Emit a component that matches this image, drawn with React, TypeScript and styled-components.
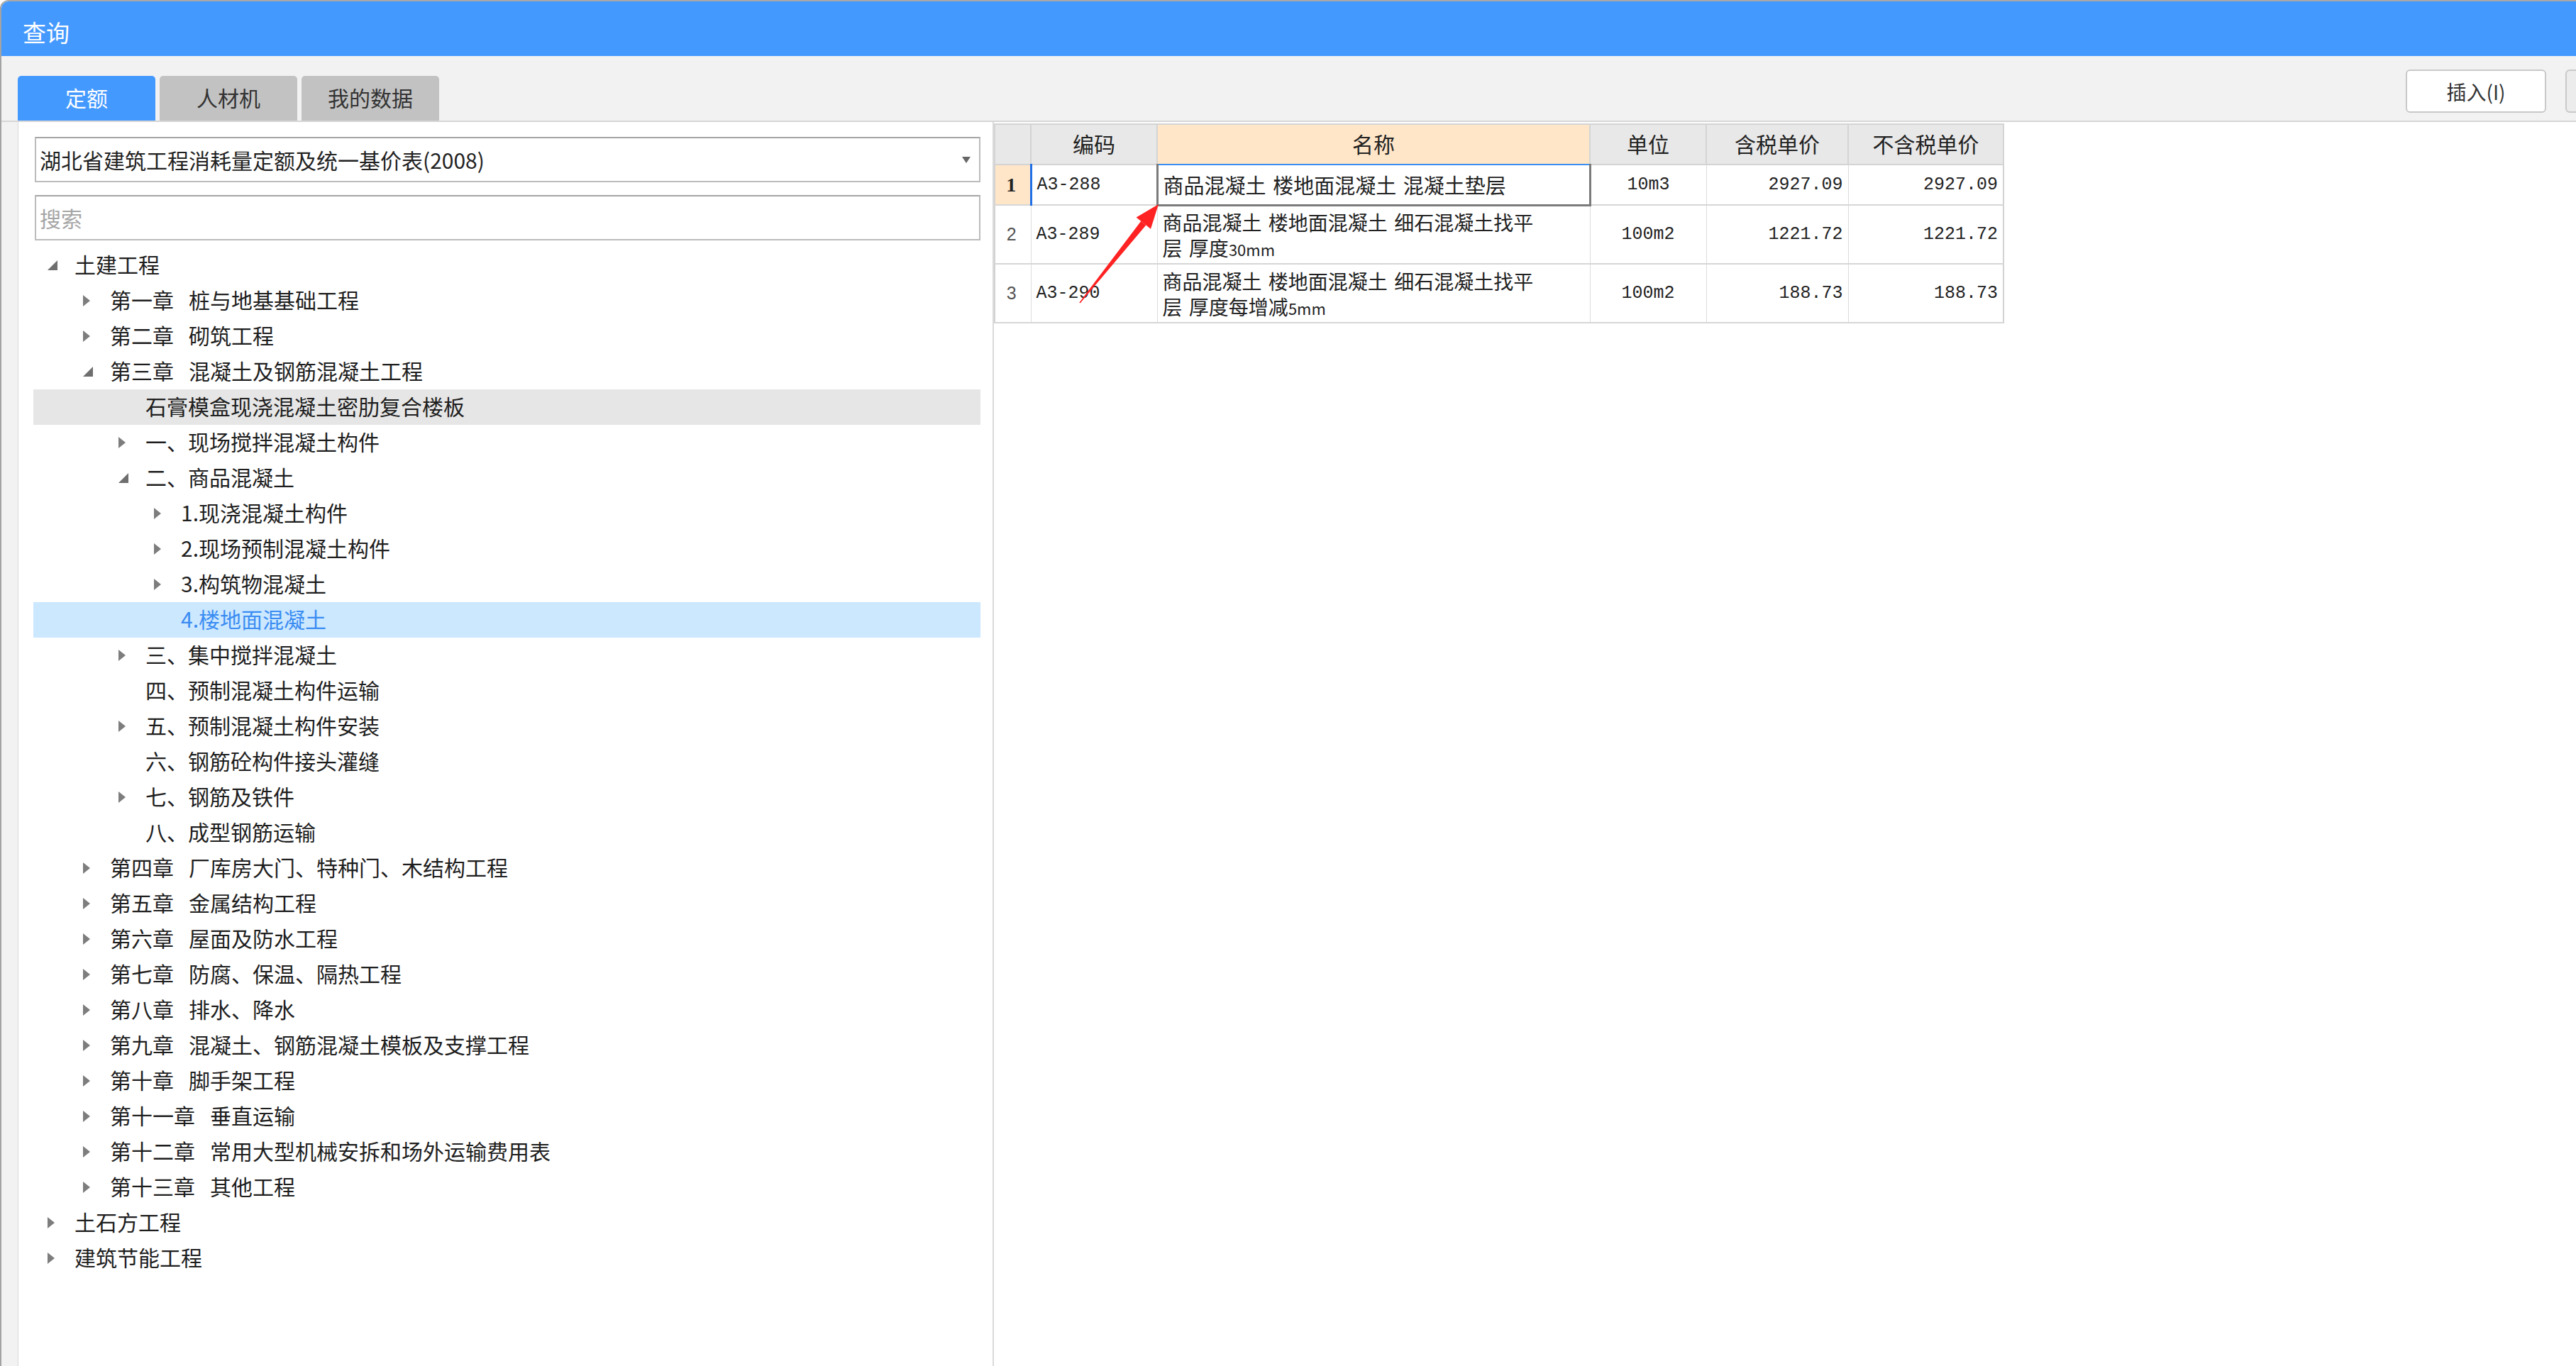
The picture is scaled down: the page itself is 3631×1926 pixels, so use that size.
import React from 'react';
import styled, { createGlobalStyle, css } from 'styled-components';

const cjk = `"Noto Sans CJK SC", "Noto Sans", sans-serif`;
const mono = `"Liberation Mono", "DejaVu Sans Mono", monospace`;

const GlobalStyle = createGlobalStyle`
  html, body { margin: 0; padding: 0; background: #ffffff; }
  body { width: 3631px; height: 1926px; overflow: hidden; font-family: ${cjk}; }
  #root { width: 100%; height: 100%; }
  * { box-sizing: border-box; }
`;

const Window = styled.div`
  width: 3631px;
  height: 1926px;
  display: flex;
  flex-direction: column;
  border-left: 2px solid #a3a3a3;
  border-top: 2px solid #a8a8a8;
  border-top-left-radius: 12px;
  overflow: hidden;
  background: #f2f2f2;
`;

const TitleBar = styled.header`
  height: 77px;
  flex: none;
  background: #4499ff;
  color: #ffffff;
  font-family: ${cjk};
  font-size: 33px;
  display: flex;
  align-items: center;
  padding: 8px 0 0 30px;
`;

const Toolbar = styled.div`
  height: 93px;
  flex: none;
  display: flex;
  align-items: flex-start;
  padding-left: 23px;
  border-bottom: 2px solid #d6d6d6;
  background: #f2f2f2;
`;

const TabList = styled.div`
  display: flex;
  gap: 6px;
  margin-top: 28px;
`;

const Tab = styled.div<{ $active?: boolean }>`
  width: 194px;
  height: 63px;
  border-radius: 5px 5px 0 0;
  display: flex;
  align-items: center;
  justify-content: center;
  padding-bottom: 3px;
  font-size: 30px;
  background: ${(p) => (p.$active ? '#4499ff' : '#c2c2c2')};
  color: ${(p) => (p.$active ? '#ffffff' : '#333333')};
`;

const ButtonGroup = styled.div`
  margin-left: auto;
  margin-top: 19px;
  margin-right: -183px;
  display: flex;
  gap: 27px;
`;

const ToolButton = styled.div<{ $muted?: boolean }>`
  width: 198px;
  height: 61px;
  flex: none;
  border: 2px solid #c9c9c9;
  border-radius: 6px;
  background: ${(p) => (p.$muted ? '#ececec' : '#ffffff')};
  display: flex;
  align-items: center;
  justify-content: center;
  font-size: 28px;
  color: #333333;
`;

const Main = styled.div`
  flex: 1;
  min-height: 0;
  display: flex;
  padding-left: 23px;
`;

const LeftPanel = styled.section`
  width: 1376px;
  flex: none;
  background: #ffffff;
  border-left: 1px solid #d9d9d9;
  border-right: 2px solid #dadada;
  padding: 21px 17px 0 21px;
  display: flex;
  flex-direction: column;
`;

const fieldBox = css`
  height: 64px;
  margin-left: 2px;
  border: 2px solid #bcbcbc;
  border-top-color: #a4a4a4;
  background: #ffffff;
  font-family: ${cjk};
  font-size: 30px;
  color: #222222;
`;

const Combo = styled.div`
  ${fieldBox};
  display: flex;
  align-items: center;
  padding: 0 12px 0 5px;
`;

const ComboArrow = styled.svg`
  margin-left: auto;
  flex: none;
`;

const SearchBox = styled.input`
  ${fieldBox};
  display: block;
  width: calc(100% - 2px);
  margin-top: 18px;
  padding: 0 5px;
  outline: none;
  &::placeholder { color: #a5a5a5; }
`;

const Tree = styled.div`
  margin-top: 10px;
  display: flex;
  flex-direction: column;
`;

type Variant = 'normal' | 'hover' | 'selected';

const TreeRow = styled.div<{ $level: number; $variant: Variant }>`
  height: 50px;
  display: flex;
  align-items: center;
  padding-left: ${(p) => 19 + p.$level * 50}px;
  font-size: 30px;
  white-space: nowrap;
  color: ${(p) => (p.$variant === 'selected' ? '#3a8cf2' : '#1e1e1e')};
  background: ${(p) =>
    p.$variant === 'selected' ? '#cce8ff' : p.$variant === 'hover' ? '#e6e6e6' : 'transparent'};
`;

const Toggle = styled.span`
  width: 39px;
  flex: none;
  display: flex;
  align-items: center;
`;

const Label = styled.span`
  line-height: 46px;
  padding-bottom: 4px;
`;

const RightPanel = styled.section`
  flex: 1;
  min-width: 0;
  position: relative;
  background: #ffffff;
  padding-top: 2px;
`;

const Grid = styled.table`
  border-collapse: collapse;
  table-layout: fixed;
  width: 1422px;
  font-family: ${cjk};
  color: #222222;
  border: 2px solid #d2d2d2;
`;

const Col = styled.col<{ $w: number }>`
  width: ${(p) => p.$w}px;
`;

const HeadCell = styled.th<{ $highlight?: boolean }>`
  height: 57px;
  padding: 0 0 3px;
  font-size: 30px;
  font-weight: 400;
  text-align: center;
  background: ${(p) => (p.$highlight ? '#ffe6c9' : '#e8e8e8')};
  border: 2px solid #d4d4d4;
  ${(p) => p.$highlight && css`border-bottom: 2px solid #3b8ff0;`}
`;

const BodyRow = styled.tr<{ $h: number }>`
  height: ${(p) => p.$h}px;
`;

const RowNum = styled.td<{ $current?: boolean }>`
  padding: 0 4px 0 0;
  text-align: center;
  font-family: ${(p) => (p.$current ? '"Liberation Serif", serif' : '"Liberation Sans", sans-serif')};
  font-size: ${(p) => (p.$current ? 28 : 25)}px;
  font-weight: ${(p) => (p.$current ? 700 : 400)};
  color: ${(p) => (p.$current ? '#222222' : '#555555')};
  background: ${(p) => (p.$current ? '#ffe6c9' : '#ffffff')};
  border: 1px solid #dcdcdc;
  border-bottom: 2px solid #d6d6d6;
  ${(p) => p.$current && css`border-right: 3px solid #1f6fe6;`}
`;

const Cell = styled.td<{ $align?: 'left' | 'center' | 'right'; $mono?: boolean; $selected?: boolean }>`
  padding: 0 7px;
  text-align: ${(p) => p.$align || 'left'};
  vertical-align: middle;
  white-space: nowrap;
  font-family: ${(p) => (p.$mono ? mono : cjk)};
  font-size: ${(p) => (p.$mono ? 25 : 29)}px;
  line-height: 41px;
  border: 1px solid #dcdcdc;
  border-bottom: 2px solid #d6d6d6;
  ${(p) =>
    p.$selected &&
    css`
      border: 3px solid #7b7b7b;
      border-top: 1px solid #dcdcdc;
    `}
`;

const NameLine = styled.span`
  display: block;
  height: 36px;
  line-height: 36px;
  font-size: 28px;
`;

const Small = styled.span`
  font-size: 22px;
  font-family: ${cjk};
`;

const ArrowOverlay = styled.svg`
  position: absolute;
  left: 99px;
  top: 98px;
  pointer-events: none;
`;

type Node = { label: string; level: number; state: 'open' | 'closed' | 'none'; variant?: Variant };

const SP = '\u2002\u2009';

const treeData: Node[] = [
  { label: '土建工程', level: 0, state: 'open' },
  { label: `第一章${SP}桩与地基基础工程`, level: 1, state: 'closed' },
  { label: `第二章${SP}砌筑工程`, level: 1, state: 'closed' },
  { label: `第三章${SP}混凝土及钢筋混凝土工程`, level: 1, state: 'open' },
  { label: '石膏模盒现浇混凝土密肋复合楼板', level: 2, state: 'none', variant: 'hover' },
  { label: '一、现场搅拌混凝土构件', level: 2, state: 'closed' },
  { label: '二、商品混凝土', level: 2, state: 'open' },
  { label: '1.现浇混凝土构件', level: 3, state: 'closed' },
  { label: '2.现场预制混凝土构件', level: 3, state: 'closed' },
  { label: '3.构筑物混凝土', level: 3, state: 'closed' },
  { label: '4.楼地面混凝土', level: 3, state: 'none', variant: 'selected' },
  { label: '三、集中搅拌混凝土', level: 2, state: 'closed' },
  { label: '四、预制混凝土构件运输', level: 2, state: 'none' },
  { label: '五、预制混凝土构件安装', level: 2, state: 'closed' },
  { label: '六、钢筋砼构件接头灌缝', level: 2, state: 'none' },
  { label: '七、钢筋及铁件', level: 2, state: 'closed' },
  { label: '八、成型钢筋运输', level: 2, state: 'none' },
  { label: `第四章${SP}厂库房大门、特种门、木结构工程`, level: 1, state: 'closed' },
  { label: `第五章${SP}金属结构工程`, level: 1, state: 'closed' },
  { label: `第六章${SP}屋面及防水工程`, level: 1, state: 'closed' },
  { label: `第七章${SP}防腐、保温、隔热工程`, level: 1, state: 'closed' },
  { label: `第八章${SP}排水、降水`, level: 1, state: 'closed' },
  { label: `第九章${SP}混凝土、钢筋混凝土模板及支撑工程`, level: 1, state: 'closed' },
  { label: `第十章${SP}脚手架工程`, level: 1, state: 'closed' },
  { label: `第十一章${SP}垂直运输`, level: 1, state: 'closed' },
  { label: `第十二章${SP}常用大型机械安拆和场外运输费用表`, level: 1, state: 'closed' },
  { label: `第十三章${SP}其他工程`, level: 1, state: 'closed' },
  { label: '土石方工程', level: 0, state: 'closed' },
  { label: '建筑节能工程', level: 0, state: 'closed' },
];

const ToggleIcon: React.FC<{ state: Node['state'] }> = ({ state }) => {
  if (state === 'closed') {
    return (
      <svg width="12" height="18" viewBox="0 0 12 18">
        <polygon points="1,1 11,9 1,17" fill="#7d7d7d" />
      </svg>
    );
  }
  if (state === 'open') {
    return (
      <svg width="16" height="16" viewBox="0 0 16 16">
        <polygon points="15,1 15,15 1,15" fill="#6e6e6e" />
      </svg>
    );
  }
  return null;
};

const T = '\u2004';

type Item = { code: string; name: React.ReactNode; unit: string; tax: string; net: string; h: number };

const items: Item[] = [
  { code: 'A3-288', name: `商品混凝土${T}楼地面混凝土${T}混凝土垫层`, unit: '10m3', tax: '2927.09', net: '2927.09', h: 57 },
  {
    code: 'A3-289',
    name: (
      <>
        <NameLine>商品混凝土{T}楼地面混凝土{T}细石混凝土找平</NameLine>
        <NameLine>
          层{T}厚度<Small>30mm</Small>
        </NameLine>
      </>
    ),
    unit: '100m2',
    tax: '1221.72',
    net: '1221.72',
    h: 83,
  },
  {
    code: 'A3-290',
    name: (
      <>
        <NameLine>商品混凝土{T}楼地面混凝土{T}细石混凝土找平</NameLine>
        <NameLine>
          层{T}厚度每增减<Small>5mm</Small>
        </NameLine>
      </>
    ),
    unit: '100m2',
    tax: '188.73',
    net: '188.73',
    h: 83,
  },
];

const colWidths = [51, 178, 610, 164, 200, 219];

export default function App() {
  return (
    <>
      <GlobalStyle />
      <Window>
        <TitleBar>查询</TitleBar>
        <Toolbar>
          <TabList>
            <Tab $active>定额</Tab>
            <Tab>人材机</Tab>
            <Tab>我的数据</Tab>
          </TabList>
          <ButtonGroup>
            <ToolButton>插入(I)</ToolButton>
            <ToolButton $muted />
          </ButtonGroup>
        </Toolbar>
        <Main>
          <LeftPanel>
            <Combo>
              湖北省建筑工程消耗量定额及统一基价表(2008)
              <ComboArrow width="12" height="9" viewBox="0 0 12 9">
                <polygon points="0,0 12,0 6,9" fill="#666666" />
              </ComboArrow>
            </Combo>
            <SearchBox placeholder="搜索" />
            <Tree>
              {treeData.map((n, i) => (
                <TreeRow key={i} $level={n.level} $variant={n.variant || 'normal'}>
                  <Toggle>
                    <ToggleIcon state={n.state} />
                  </Toggle>
                  <Label>{n.label}</Label>
                </TreeRow>
              ))}
            </Tree>
          </LeftPanel>
          <RightPanel>
            <Grid>
              <colgroup>
                {colWidths.map((w, i) => (
                  <Col key={i} $w={w} />
                ))}
              </colgroup>
              <thead>
                <tr>
                  <HeadCell />
                  <HeadCell>编码</HeadCell>
                  <HeadCell $highlight>名称</HeadCell>
                  <HeadCell>单位</HeadCell>
                  <HeadCell>含税单价</HeadCell>
                  <HeadCell>不含税单价</HeadCell>
                </tr>
              </thead>
              <tbody>
                {items.map((it, i) => (
                  <BodyRow key={it.code} $h={it.h}>
                    <RowNum $current={i === 0}>{i + 1}</RowNum>
                    <Cell $mono>{it.code}</Cell>
                    <Cell $selected={i === 0}>{it.name}</Cell>
                    <Cell $mono $align="center">{it.unit}</Cell>
                    <Cell $mono $align="right">{it.tax}</Cell>
                    <Cell $mono $align="right">{it.net}</Cell>
                  </BodyRow>
                ))}
              </tbody>
            </Grid>
            <ArrowOverlay width="150" height="170" viewBox="0 0 150 170">
              <polygon points="22.6,157.5 21.4,156.5 108.3,41.8 115.3,47.4" fill="#ff2222" />
              <polygon points="133,18 122,52.7 101.6,36.5" fill="#ff2222" />
            </ArrowOverlay>
          </RightPanel>
        </Main>
      </Window>
    </>
  );
}
